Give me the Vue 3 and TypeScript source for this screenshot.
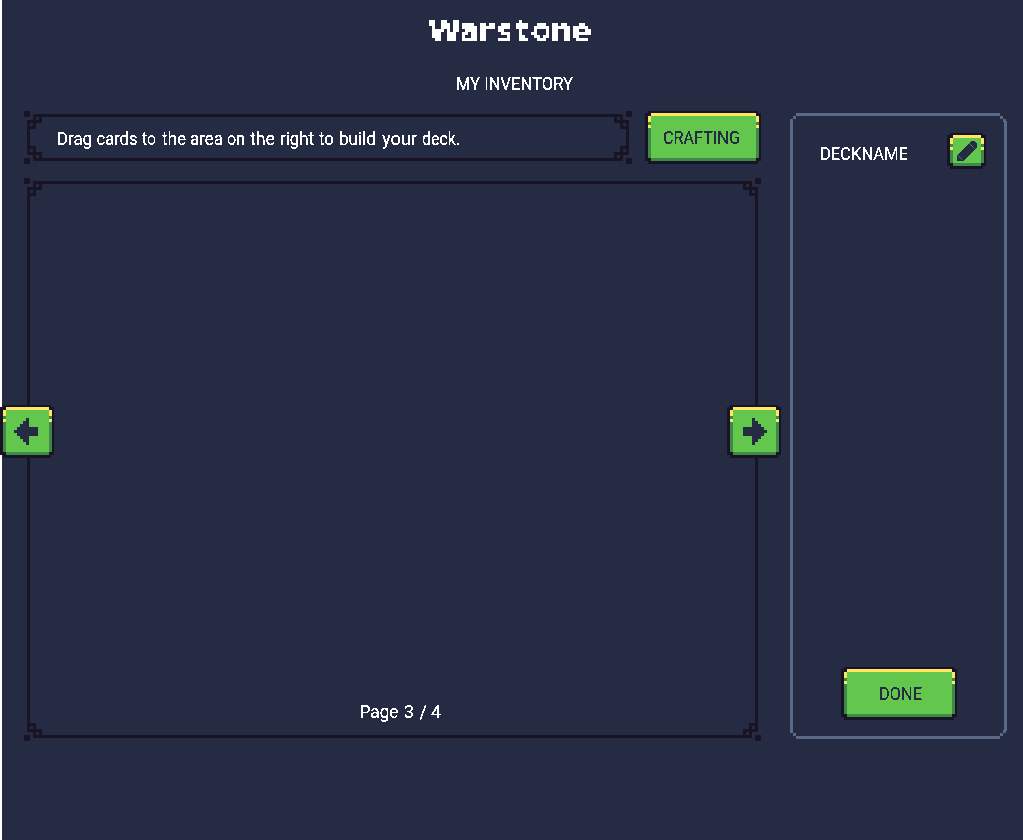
<script setup lang="ts">
import { defineComponent, h } from 'vue'

interface Corner {
  key: string
  transform: string
}

const LINE = 3

// Ornamental corner drawn on a 3px grid: a loose square and two linked rings.
const cornerPath =
  'M0 0h6v6h-6z M9 3h9v9h-6v6h-9v-9h6z M12 6v3h3v-3z M6 12v3h3v-3z'

const PixelFrame = defineComponent({
  props: {
    w: { type: Number, required: true },
    h: { type: Number, required: true },
  },
  setup(props) {
    return () => {
      const { w, h: ht } = props
      const corners: Corner[] = [
        { key: 'tl', transform: 'translate(0 0)' },
        { key: 'tr', transform: `translate(${w} 0) scale(-1 1)` },
        { key: 'bl', transform: `translate(0 ${ht}) scale(1 -1)` },
        { key: 'br', transform: `translate(${w} ${ht}) scale(-1 -1)` },
      ]
      return h('svg', { width: w, height: ht, fill: '#181425', 'shape-rendering': 'crispEdges' }, [
        h('path', {
          'fill-rule': 'evenodd',
          d: `M9 3H${w - 9}v${LINE}H9z M9 ${ht - 6}H${w - 9}v${LINE}H9z M3 9h${LINE}V${ht - 9}H3z M${w - 6} 9h${LINE}V${ht - 9}h-${LINE}z`,
        }),
        ...corners.map((c) =>
          h('path', { key: c.key, d: cornerPath, 'fill-rule': 'evenodd', transform: c.transform }),
        ),
      ])
    }
  },
})

const PixelButton = defineComponent({
  props: {
    w: { type: Number, required: true },
    h: { type: Number, required: true },
  },
  setup(props, { slots }) {
    return () => {
      const { w, h: ht } = props
      const right = w - 5
      const low = ht - 6
      return h('svg', { width: w, height: ht, 'shape-rendering': 'crispEdges' }, [
        h('path', { fill: '#181425', d: `M3 0H${w - 3}V2H${w}V${ht - 3}H${w - 3}V${ht}H3V${ht - 3}H0V2H3z` }),
        h('path', { fill: '#3e8948', d: `M3 5H${w - 2}V${low}H${right}V${ht - 3}H6V${low}H3z` }),
        h('path', { fill: '#63c74d', d: `M6 5H${right}V${low}H6z` }),
        h('path', {
          fill: '#fee761',
          d: `M6 2H${right}v3H6z M3 5h3v6h-3z M3 14h3v3h-3z M${right} 5h3v6h-3z M${right} 14h3v3h-3z`,
        }),
        slots.default?.(),
      ])
    }
  },
})

const arrowPath =
  'M14 26h3v-3h3v-3h3v-3h3v-3h3v9h9v9h-9v9h-3v-3h-3v-3h-3v-3h-3v-3h-3z'

const page = 3
const pageCount = 4
const hint: { text: string; x: number; width: number }[] = [
  { text: 'Drag', x: 33, width: 35 },
  { text: 'cards', x: 72.5, width: 41 },
  { text: 'to', x: 118, width: 14 },
  { text: 'the', x: 138, width: 24 },
  { text: 'area', x: 166, width: 33 },
  { text: 'on', x: 203, width: 18 },
  { text: 'the', x: 226, width: 25 },
  { text: 'right', x: 256, width: 34 },
  { text: 'to', x: 295, width: 15 },
  { text: 'build', x: 315, width: 37 },
  { text: 'your', x: 358, width: 35 },
  { text: 'deck.', x: 398, width: 38 },
]
</script>

<template>
  <main class="screen">
    <svg class="defs" width="0" height="0">
      <filter id="crisp" x="-5%" y="-20%" width="110%" height="140%" color-interpolation-filters="sRGB">
        <feComponentTransfer><feFuncA type="discrete" tableValues="0 0 1 1 1" /></feComponentTransfer>
      </filter>
      <filter
        id="mosaic"
        filterUnits="userSpaceOnUse"
        x="0"
        y="0"
        width="183"
        height="42"
        color-interpolation-filters="sRGB"
      >
        <feFlood x="1" y="1" width="1" height="1" flood-color="#fff" result="dot" />
        <feOffset in="dot" x="0" y="0" width="3" height="3" dx="0" dy="0" />
        <feTile result="grid" />
        <feComposite in="SourceGraphic" in2="grid" operator="in" />
        <feMorphology operator="dilate" radius="1" />
        <feComponentTransfer><feFuncA type="discrete" tableValues="0 1" /></feComponentTransfer>
      </filter>
    </svg>

    <header class="header">
      <svg class="logo" width="183" height="42">
        <text x="5 36.5 56 72 92 108 127.5 148" y="33">Warstone</text>
      </svg>
      <svg class="label light" width="144" height="28">
        <text x="13" y="20" textLength="117" lengthAdjust="spacingAndGlyphs">MY INVENTORY</text>
      </svg>
    </header>

    <div class="content">
      <section class="inventory">
        <div class="toolbar">
          <div class="hint">
            <PixelFrame :w="608" :h="53" />
            <svg class="overlay label light" width="608" height="53">
              <text y="34">
                <tspan
                  v-for="(word, i) in hint"
                  :key="i"
                  :x="word.x"
                  :textLength="word.width"
                  lengthAdjust="spacingAndGlyphs"
                >{{ word.text }}</tspan>
              </text>
            </svg>
          </div>
          <button class="button">
            <PixelButton :w="116" :h="53">
              <text class="label" x="18" y="33" textLength="77" lengthAdjust="spacingAndGlyphs">CRAFTING</text>
            </PixelButton>
          </button>
        </div>

        <div class="cards">
          <PixelFrame :w="737" :h="563" />
          <button class="button previous">
            <PixelButton :w="54" :h="53">
              <path :d="arrowPath" transform="translate(0 -1)" fill="#262b44" />
            </PixelButton>
          </button>
          <button class="button next">
            <PixelButton :w="54" :h="53">
              <path :d="arrowPath" transform="translate(54 -1) scale(-1 1)" fill="#262b44" />
            </PixelButton>
          </button>
          <svg class="pager label light" width="90" height="28">
            <text y="18">
              <tspan x="3.5" textLength="39" lengthAdjust="spacingAndGlyphs">Page</tspan>
              <tspan x="48">{{ page }}</tspan>
              <tspan x="63.5">/</tspan>
              <tspan x="75">{{ pageCount }}</tspan>
            </text>
          </svg>
        </div>
      </section>

      <aside class="deck">
        <svg class="overlay" width="217" height="626" shape-rendering="crispEdges">
          <path
            fill="#5a6988"
            d="M6 0H210v3H6z M0 6h3V620H0z M6 623H210v3H6z M214 8h3V618h-3z M3 3h3v3h-3z M3 620h3v3h-3z M210 3h3v3h-3z M213 6h3v3h-3z M213 617h3v3h-3z M210 620h3v3h-3z"
          />
        </svg>
        <div class="deck-head">
          <svg class="label light" width="112" height="28">
            <text x="12" y="20" textLength="88" lengthAdjust="spacingAndGlyphs">DECKNAME</text>
          </svg>
          <button class="button">
            <PixelButton :w="39" :h="36">
              <path fill="#262b44" d="M10 28v-6l14-14h3l3 3v3l-14 14z" />
              <path
                class="pencil-detail"
                shape-rendering="auto"
                d="M11 22.500l4.500 4.500M22.500 10.500l5 5"
              />
            </PixelButton>
          </button>
        </div>
        <button class="button done">
          <PixelButton :w="116" :h="53">
            <text class="label" x="38" y="33" textLength="43" lengthAdjust="spacingAndGlyphs">DONE</text>
          </PixelButton>
        </button>
      </aside>
    </div>
  </main>
</template>

<style>
body {
  background: #fff;
}
</style>

<style scoped>
.screen {
  box-sizing: border-box;
  width: 1023px;
  height: 840px;
  border-left: 2px solid #fff;
  background: #262b44;
}
.defs {
  position: absolute;
}
svg {
  display: block;
}
.header {
  height: 111px;
  box-sizing: border-box;
  padding-top: 8px;
  display: flex;
  flex-direction: column;
}
.logo {
  margin-left: 421px;
}
.logo text {
  fill: #fff;
  font: 700 30px 'DejaVu Sans', sans-serif;
  filter: url(#mosaic);
}
.header .label {
  margin: 20px 0 0 441px;
}
.label {
  font: 400 18px Roboto, sans-serif;
  fill: #262b44;
  filter: url(#crisp);
}
.light {
  fill: #fff;
}
.content {
  display: flex;
  align-items: flex-start;
}
.inventory {
  width: 788px;
}
.toolbar {
  display: flex;
  gap: 13px;
  padding-left: 22px;
}
.hint {
  position: relative;
}
.overlay {
  position: absolute;
  top: 0;
  left: 0;
}
.cards {
  position: relative;
  width: 737px;
  margin: 14px 0 0 22px;
}
.button {
  display: block;
  padding: 0;
  border: 0;
  background: none;
  cursor: pointer;
}
.pencil-detail {
  fill: none;
  stroke: #63c74d;
  stroke-width: 0.8px;
  stroke-dasharray: 1.4 0.6;
}
.previous,
.next {
  position: absolute;
  top: 227px;
}
.previous {
  left: -24px;
}
.next {
  left: 703px;
}
.pager {
  position: absolute;
  left: 332px;
  top: 522px;
}
.deck {
  position: relative;
  box-sizing: border-box;
  width: 217px;
  height: 626px;
  margin-top: 2px;
  padding: 20px 21px 19px 18px;
  display: flex;
  flex-direction: column;
  justify-content: space-between;
}
.deck-head {
  display: flex;
  justify-content: space-between;
}
.deck-head .label {
  margin-top: 7px;
}
.done {
  align-self: center;
  position: relative;
  margin-left: 3px;
}
</style>
